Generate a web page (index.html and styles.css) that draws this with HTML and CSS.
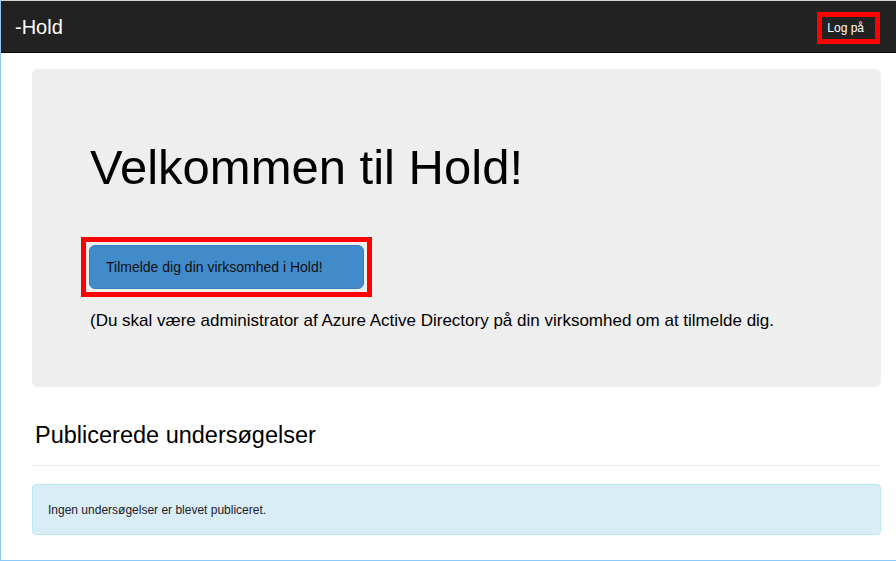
FILE: index.html
```html
<!DOCTYPE html>
<html lang="da">
<head>
<meta charset="utf-8">
<title>Hold</title>
<link rel="stylesheet" href="styles.css">
</head>
<body>
<div class="frame">
  <header class="navbar">
    <a class="brand" href="#">-Hold</a>
    <span class="highlight highlight-nav"><a class="login" href="#">Log på</a></span>
  </header>
  <main class="container">
    <section class="jumbotron">
      <h1 class="title">Velkommen til Hold!</h1>
      <div class="highlight highlight-btn"><a class="btn-primary" href="#">Tilmelde dig din virksomhed i Hold!</a></div>
      <p class="lead">(Du skal være administrator af Azure Active Directory på din virksomhed om at tilmelde dig.</p>
    </section>
    <h3 class="section-title">Publicerede undersøgelser</h3>
    <hr class="divider">
    <div class="alert">Ingen undersøgelser er blevet publiceret.</div>
  </main>
</div>
</body>
</html>
```

FILE: styles.css
```css
html, body {
  margin: 0;
  padding: 0;
  background: #fff;
}
body {
  font-family: "Liberation Sans", Arial, sans-serif;
  color: #000;
}
.frame {
  box-sizing: border-box;
  height: 561px;
  border-top: 1px solid #d4d4d4;
  border-left: 1px solid #8ec8f6;
  border-bottom: 1px solid #8ec8f6;
  overflow: hidden;
}
.navbar {
  height: 51px;
  background: #222;
  border-bottom: 1px solid #080808;
  display: flex;
  align-items: center;
  justify-content: space-between;
  padding: 0 16px 0 14px;
}
.brand {
  color: #fff;
  text-decoration: none;
  font-size: 20px;
  line-height: 20px;
  margin-top: 1px;
}
.highlight {
  border: 5px solid #ff0000;
}
.highlight-nav {
  display: block;
  margin-top: 2px;
}
.login {
  display: block;
  color: #fff;
  text-decoration: none;
  font-size: 12px;
  line-height: 16px;
  padding: 3px 11px 3px 5px;
}
.container {
  padding: 16px 15px 0 31px;
}
.jumbotron {
  background: #eeeeee;
  border-radius: 6px;
  padding: 71px 40px 54px 58px;
}
.title {
  margin: 0 0 43px 0;
  font-size: 49px;
  font-weight: normal;
  line-height: 54px;
}
.highlight-btn {
  width: fit-content;
  padding: 3px;
  margin-left: -9px;
}
.btn-primary {
  display: block;
  box-sizing: border-box;
  width: 275px;
  height: 44px;
  padding: 0 0 0 16px;
  line-height: 42px;
  font-size: 14px;
  color: #111;
  text-decoration: none;
  background: #428bca;
  border: 1px solid #357ebd;
  border-radius: 6px;
}
.lead {
  margin: 11px 0 0 0;
  font-size: 17px;
  line-height: 25px;
}
.section-title {
  margin: 35px 0 0 3px;
  font-size: 23.5px;
  font-weight: normal;
  line-height: 27px;
}
.divider {
  margin: 16px 0 0 0;
  border: 0;
  border-top: 1px solid #eeeeee;
  height: 0;
}
.alert {
  margin-top: 18px;
  background: #d9edf7;
  border: 1px solid #bce8f1;
  border-radius: 4px;
  padding: 17px 15px 15px 15px;
  font-size: 12px;
  line-height: 17px;
  color: #1c1c2c;
}
```
